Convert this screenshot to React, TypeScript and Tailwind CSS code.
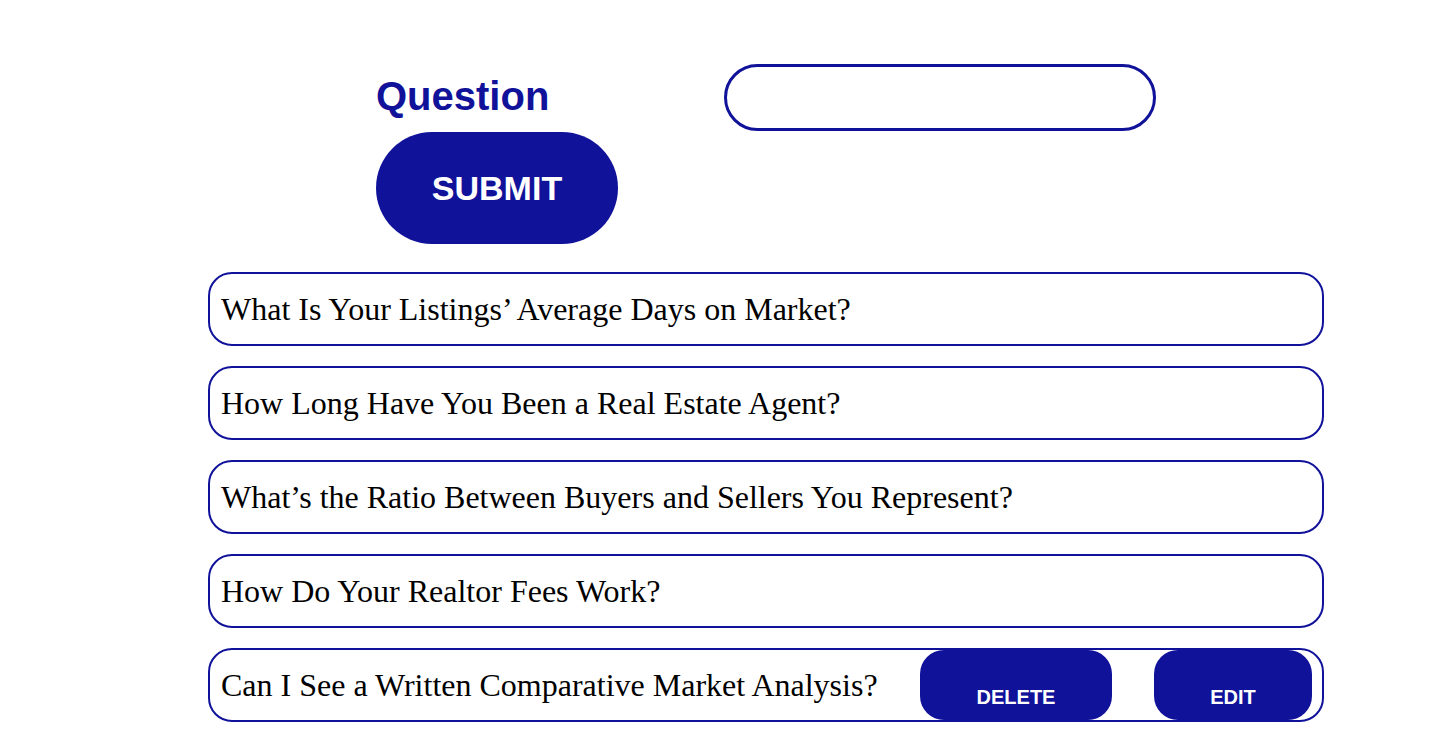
const questions = [
  "What Is Your Listings\u2019 Average Days on Market?",
  "How Long Have You Been a Real Estate Agent?",
  "What\u2019s the Ratio Between Buyers and Sellers You Represent?",
  "How Do Your Realtor Fees Work?",
  "Can I See a Written Comparative Market Analysis?",
];

export default function App() {
  return (
    <div className="min-h-[734px] bg-white font-['Liberation_Sans',Arial,sans-serif]">
      <div className="ml-[376px] pt-[64px]">
        <div className="flex h-[67px] items-center">
          <label className="w-[348px] -mt-[4px] text-[40px] font-bold text-[#11129a]">
            Question
          </label>
          <input
            type="text"
            className="h-[67px] w-[432px] rounded-full border-[3px] border-[#11129a] px-6 outline-none"
          />
        </div>
        <button className="mt-[1px] h-[112px] w-[242px] rounded-[56px] bg-[#11129a] text-[34px] font-bold text-white">
          SUBMIT
        </button>
      </div>

      <ul className="ml-[208px] mt-[28px] flex w-[1116px] flex-col gap-[20px]">
        {questions.map((q, i) => (
          <li
            key={i}
            className="flex h-[74px] items-stretch rounded-[24px] border-2 border-[#11129a] pl-[11px] pr-[10px]"
          >
            <span className="flex items-center font-['Liberation_Serif','Times_New_Roman',serif] text-[32px] text-black">
              {q}
            </span>
            {i === questions.length - 1 && (
              <div className="ml-auto flex gap-[42px]">
                <button className="flex w-[192px] items-end justify-center rounded-[24px] bg-[#11129a] pb-[13px] text-[20px] font-bold leading-none text-white">
                  DELETE
                </button>
                <button className="flex w-[158px] items-end justify-center rounded-[24px] bg-[#11129a] pb-[13px] text-[20px] font-bold leading-none text-white">
                  EDIT
                </button>
              </div>
            )}
          </li>
        ))}
      </ul>
    </div>
  );
}
